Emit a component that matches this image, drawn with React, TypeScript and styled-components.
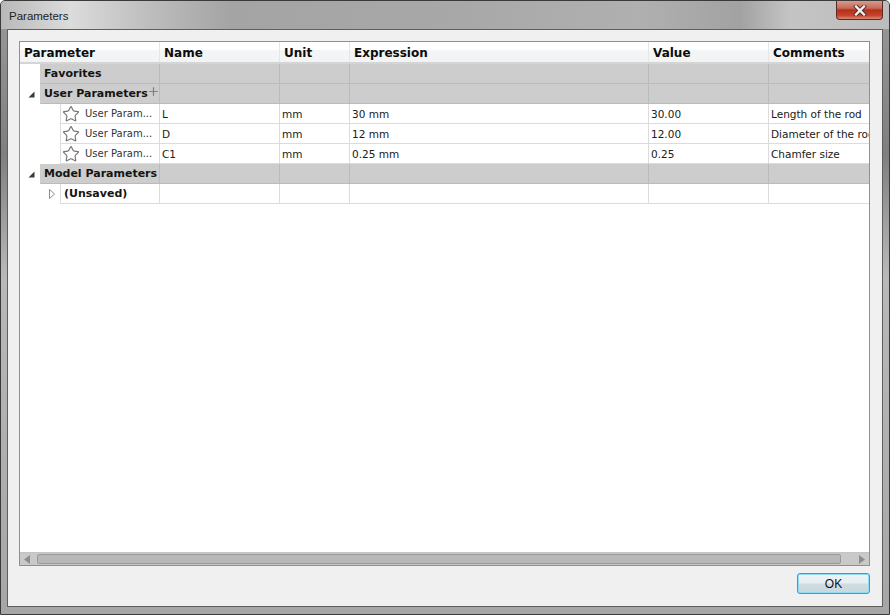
import { Plus, Star } from 'lucide-react';
import styled, { createGlobalStyle } from 'styled-components';

const GlobalStyle = createGlobalStyle`
  html, body {
    margin: 0;
    padding: 0;
    background: #fff;
  }
  body {
    font-family: Tahoma, 'DejaVu Sans', sans-serif;
    font-size: 11px;
    color: #111;
  }
`;

const COLUMNS = '140px 120px 70px 299px 120px 120px';

const Window = styled.div`
  width: 890px;
  height: 615px;
  box-sizing: border-box;
  display: flex;
  flex-direction: column;
  overflow: hidden;
  border: 1px solid #3a3a3a;
  border-radius: 5px 5px 0 0;
  background: linear-gradient(180deg, #9a9a9a 0, #7f7f7f 25%, #b9b9b9 45%, #a6a6a6 100%);
`;

const TitleBar = styled.div`
  height: 28px;
  flex: none;
  display: flex;
  align-items: flex-start;
  justify-content: space-between;
  margin: 0 -1px;
  padding: 0 7px 0 9px;
  background: linear-gradient(
    90deg,
    #b8b8b8 0,
    #dcdcdc 70px,
    #bdbdbd 150px,
    #a4a4a4 230px,
    #a8a8a8 460px,
    #b0b0b0 640px,
    #a2a2a2 740px,
    #c4c4c4 790px,
    #bcbcbc 890px
  );
`;

const TitleText = styled.span`
  font-family: 'Liberation Sans', sans-serif;
  font-size: 11.5px;
  line-height: 30px;
  color: #222;
`;

const CloseButton = styled.button`
  width: 47px;
  height: 19px;
  padding: 0;
  display: flex;
  align-items: center;
  justify-content: center;
  border: 1px solid #5c2a22;
  border-top: none;
  border-radius: 0 0 4px 4px;
  background: linear-gradient(180deg, #d99a8c 0, #c56a58 40%, #b5301c 50%, #c9412a 80%, #d98a76 100%);
`;

const ClientArea = styled.div`
  flex: 1;
  display: flex;
  flex-direction: column;
  margin: 0 6px 7px 6px;
  padding: 11px 12px 12px 11px;
  background: #f0f0f0;
  border: 1px solid #5f5f5f;
  min-height: 0;
`;

const Panel = styled.div`
  flex: 1;
  min-height: 0;
  display: flex;
  flex-direction: column;
  background: #fff;
  border: 1px solid #8e9092;
`;

const GridArea = styled.div`
  flex: 1;
  min-height: 0;
  overflow: hidden;
`;

const HeaderRow = styled.div`
  display: grid;
  grid-template-columns: ${COLUMNS};
  width: 869px;
  height: 22px;
  box-sizing: border-box;
  border-bottom: 2px solid #d5d5d5;
  background: linear-gradient(180deg, #fff 0, #fff 40%, #f4f5f6 42%, #f2f3f4 100%);
`;

const HeaderCell = styled.div`
  padding-left: 4px;
  font-family: 'DejaVu Sans', sans-serif;
  font-weight: 700;
  font-size: 12px;
  line-height: 22px;
  color: #0c0c0c;
  border-right: 1px solid #e6e6e6;
  box-sizing: border-box;
  overflow: hidden;
  white-space: nowrap;
`;

const Row = styled.div`
  display: grid;
  grid-template-columns: ${COLUMNS};
  width: 869px;
  height: 20px;
`;

const Cell = styled.div<{ $section?: boolean }>`
  box-sizing: border-box;
  padding-left: 2px;
  font-family: 'DejaVu Sans', sans-serif;
  font-size: 10.5px;
  line-height: 20px;
  color: #202020;
  white-space: nowrap;
  overflow: hidden;
  background: ${(p) => (p.$section ? '#cdcdcd' : '#fff')};
  border-right: 1px solid ${(p) => (p.$section ? '#bbb' : '#dcdcdc')};
  border-bottom: 1px solid ${(p) => (p.$section ? '#bbb' : '#dcdcdc')};
`;

const TreeCell = styled.div`
  display: flex;
  min-width: 0;
`;

const Gutter = styled.div<{ $width: number }>`
  flex: none;
  width: ${(p) => p.$width}px;
  display: flex;
  align-items: center;
  justify-content: flex-end;
  padding-right: 5px;
  box-sizing: border-box;
  background: #fff;
`;

const TreeBody = styled.div<{ $section?: boolean; $bold?: boolean }>`
  flex: 1;
  min-width: 0;
  display: flex;
  align-items: center;
  box-sizing: border-box;
  padding-left: 3px;
  font-family: 'DejaVu Sans', sans-serif;
  font-size: ${(p) => (p.$bold ? '11px' : '10px')};
  font-weight: ${(p) => (p.$bold ? 700 : 400)};
  color: #141414;
  white-space: nowrap;
  background: ${(p) => (p.$section ? '#cdcdcd' : '#fff')};
  border-right: 1px solid ${(p) => (p.$section ? '#bbb' : '#dcdcdc')};
  border-bottom: 1px solid ${(p) => (p.$section ? '#bbb' : '#dcdcdc')};
  border-left: 1px solid ${(p) => (p.$section ? 'transparent' : '#dcdcdc')};
`;

const ParamLabel = styled.span`
  margin-left: 5px;
  color: #333;
`;

const AddIcon = styled(Plus)`
  flex: none;
  margin: -4px 0 0 -1px;
  color: #808080;
`;

const FavIcon = styled(Star)`
  flex: none;
  margin-left: -2px;
  color: #777;
`;

const ScrollBar = styled.div`
  height: 12px;
  flex: none;
  display: flex;
  align-items: center;
  justify-content: space-between;
  padding: 0 4px;
  background: #c9c9c9;
  border-top: 1px solid #c4c4c4;
`;

const ScrollThumb = styled.div`
  width: 804px;
  height: 10px;
  box-sizing: border-box;
  margin-left: 2px;
  margin-right: 14px;
  background: #b8b8b8;
  border: 1px solid #9a9a9a;
  border-radius: 2px;
`;

const Footer = styled.div`
  flex: none;
  display: flex;
  justify-content: flex-end;
  padding-top: 7px;
`;

const OkButton = styled.button`
  width: 73px;
  height: 21px;
  padding: 0;
  font-family: 'Liberation Sans', sans-serif;
  font-size: 12px;
  color: #111;
  border: 1px solid #2aa3d8;
  border-radius: 3px;
  box-shadow: inset 0 0 0 1px #8fdcf6;
  background: linear-gradient(180deg, #eef4f7 0, #e6eef2 48%, #cfdde3 52%, #c8d8df 100%);
`;

const Expanded = () => (
  <svg width="7" height="7" viewBox="0 0 7 7">
    <polygon points="6.5,0.5 6.5,6.5 0.5,6.5" fill="#3a3a3a" />
  </svg>
);

const Collapsed = () => (
  <svg width="6" height="10" viewBox="0 0 6 10">
    <polygon points="0.5,0.5 5.5,5 0.5,9.5" fill="#fff" stroke="#8c8c8c" />
  </svg>
);

const ArrowLeft = () => (
  <svg width="6" height="9" viewBox="0 0 6 9">
    <polygon points="6,0 0,4.5 6,9" fill="#8d8d8d" />
  </svg>
);

const ArrowRight = () => (
  <svg width="6" height="9" viewBox="0 0 6 9">
    <polygon points="0,0 6,4.5 0,9" fill="#8d8d8d" />
  </svg>
);

const CloseGlyph = () => (
  <svg width="14" height="11" viewBox="0 0 14 11">
    <path d="M3 1.5 L11 9.5 M11 1.5 L3 9.5" stroke="#4b2a26" strokeWidth="4" strokeLinecap="square" />
    <path d="M3 1.5 L11 9.5 M11 1.5 L3 9.5" stroke="#f4f4f4" strokeWidth="2.4" strokeLinecap="square" />
  </svg>
);

const headers = ['Parameter', 'Name', 'Unit', 'Expression', 'Value', 'Comments'];

const userParams = [
  { name: 'L', unit: 'mm', expression: '30 mm', value: '30.00', comment: 'Length of the rod' },
  { name: 'D', unit: 'mm', expression: '12 mm', value: '12.00', comment: 'Diameter of the rod' },
  { name: 'C1', unit: 'mm', expression: '0.25 mm', value: '0.25', comment: 'Chamfer size' },
];

const EmptyCells = ({ section }: { section?: boolean }) => (
  <>
    {[0, 1, 2, 3, 4].map((i) => (
      <Cell key={i} $section={section} />
    ))}
  </>
);

const App = () => {
  return (
    <Window>
      <GlobalStyle />
      <TitleBar>
        <TitleText>Parameters</TitleText>
        <CloseButton>
          <CloseGlyph />
        </CloseButton>
      </TitleBar>
      <ClientArea>
        <Panel>
          <GridArea>
            <HeaderRow>
              {headers.map((h) => (
                <HeaderCell key={h}>{h}</HeaderCell>
              ))}
            </HeaderRow>
            <Row>
              <TreeCell>
                <Gutter $width={20} />
                <TreeBody $section $bold>
                  Favorites
                </TreeBody>
              </TreeCell>
              <EmptyCells section />
            </Row>
            <Row>
              <TreeCell>
                <Gutter $width={20}>
                  <Expanded />
                </Gutter>
                <TreeBody $section $bold>
                  User Parameters
                  <AddIcon size={13} strokeWidth={2.2} />
                </TreeBody>
              </TreeCell>
              <EmptyCells section />
            </Row>
            {userParams.map((p) => (
              <Row key={p.name}>
                <TreeCell>
                  <Gutter $width={40} />
                  <TreeBody>
                    <FavIcon size={18} strokeWidth={1.6} />
                    <ParamLabel>User Param...</ParamLabel>
                  </TreeBody>
                </TreeCell>
                <Cell>{p.name}</Cell>
                <Cell>{p.unit}</Cell>
                <Cell>{p.expression}</Cell>
                <Cell>{p.value}</Cell>
                <Cell>{p.comment}</Cell>
              </Row>
            ))}
            <Row>
              <TreeCell>
                <Gutter $width={20}>
                  <Expanded />
                </Gutter>
                <TreeBody $section $bold>
                  Model Parameters
                </TreeBody>
              </TreeCell>
              <EmptyCells section />
            </Row>
            <Row>
              <TreeCell>
                <Gutter $width={40}>
                  <Collapsed />
                </Gutter>
                <TreeBody $bold>(Unsaved)</TreeBody>
              </TreeCell>
              <EmptyCells />
            </Row>
          </GridArea>
          <ScrollBar>
            <ArrowLeft />
            <ScrollThumb />
            <ArrowRight />
          </ScrollBar>
        </Panel>
        <Footer>
          <OkButton>OK</OkButton>
        </Footer>
      </ClientArea>
    </Window>
  );
};

export default App;
